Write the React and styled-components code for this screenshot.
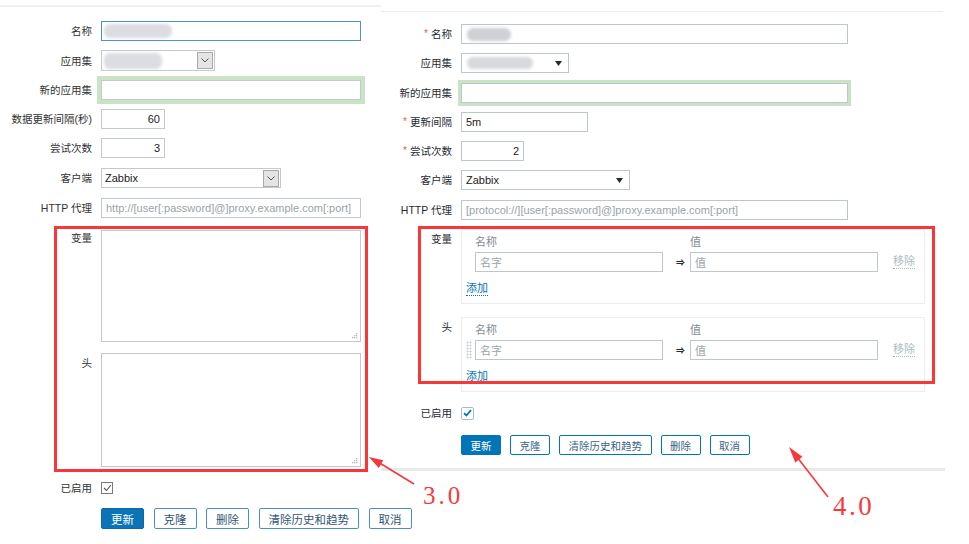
import React from "react";
import styled, { createGlobalStyle } from "styled-components";

const GlobalStyle = createGlobalStyle`
  html, body {
    margin: 0;
    padding: 0;
    background: #fff;
    overflow: hidden;
  }
  body {
    font-family: "Liberation Sans", "Noto Sans CJK SC", sans-serif;
    color: #333;
  }
`;

const Page = styled.div`
  position: relative;
  width: 969px;
  height: 544px;
  display: flex;
  align-items: flex-start;
`;

/* ---------- 3.0 panel (left) ---------- */

const OldPanel = styled.div`
  width: 381px;
  flex: none;
  padding-top: 5px;
`;

const OldTopLine = styled.div`
  width: 428px;
  height: 2px;
  background: #f0f0f0;
`;

const Form = styled.div`
  display: flex;
  flex-direction: column;
  padding-top: ${(p) => p.$top}px;
`;

const Row = styled.div`
  display: grid;
  grid-template-columns: ${(p) => p.$labelW}px auto;
  column-gap: 9px;
  align-items: ${(p) => (p.$top ? "start" : "center")};
  margin-top: ${(p) => p.$mt || 0}px;
`;

const Label = styled.div`
  text-align: right;
  font-size: 10.5px;
  line-height: 14px;
  white-space: nowrap;
  color: ${(p) => (p.$new ? "#1f2c33" : "#333")};
  padding-top: ${(p) => p.$pt || 0}px;
`;

const Req = styled.span`
  color: #e45959;
  font-size: 10px;
  margin-right: 3px;
  vertical-align: 1px;
`;

const Field = styled.div`
  box-sizing: border-box;
  width: ${(p) => p.$w}px;
  height: ${(p) => p.$h || 20}px;
  border: 1px solid ${(p) => (p.$focus ? "#4b93c8" : p.$new ? "#bcc6cc" : "#c3cacf")};
  background: #fff;
  display: flex;
  align-items: ${(p) => (p.$grip ? "flex-end" : "center")};
  justify-content: ${(p) => (p.$right || p.$grip ? "flex-end" : "flex-start")};
  padding: ${(p) => (p.$grip ? "2px" : "0 4px")};
  font-size: 11px;
  color: ${(p) => (p.$muted ? "#9aa3a8" : "#222")};
  box-shadow: ${(p) => (p.$glow ? `0 0 0 ${p.$glow}px #c8e4c5` : "none")};
  overflow: hidden;
  white-space: nowrap;
`;

const Blur = styled.div`
  width: ${(p) => p.$w}px;
  height: ${(p) => p.$h}px;
  margin-left: ${(p) => p.$ml || 0}px;
  background: ${(p) => p.$c || "#dcdde2"};
  border-radius: 6px;
  filter: blur(1.5px);
  flex: none;
`;

const OldSelect = styled(Field)`
  padding: 0 1px 0 0;
`;

const SelectValue = styled.div`
  flex: 1;
  display: flex;
  align-items: center;
  padding-left: 3px;
`;

const DropBtn = styled.div`
  box-sizing: border-box;
  width: 16px;
  height: 17px;
  background: #e4e4e4;
  border: 1px solid #a9a9a9;
  display: flex;
  align-items: center;
  justify-content: center;
`;

const NewSelect = styled(Field)`
  justify-content: space-between;
  padding: 0 6px 0 4px;
`;

const OldCheck = styled.div`
  box-sizing: border-box;
  width: 12px;
  height: 12px;
  border: 1px solid #7b7b7b;
  display: flex;
  align-items: center;
  justify-content: center;
`;

const ButtonBar = styled.div`
  display: flex;
  gap: ${(p) => p.$gap}px;
  white-space: nowrap;
`;

const OldButton = styled.div`
  box-sizing: border-box;
  height: 21px;
  padding: 0 9px;
  display: flex;
  align-items: center;
  font-size: 11.5px;
  border-radius: 2px;
  border: 1px solid ${(p) => (p.$primary ? "#0a6aa8" : "#4a8fc4")};
  background: ${(p) => (p.$primary ? "#0a74b6" : "#fff")};
  color: ${(p) => (p.$primary ? "#fff" : "#2f5576")};
`;

/* ---------- 4.0 panel (right) ---------- */

const NewPanel = styled.div`
  width: 564px;
  flex: none;
  padding-top: 11px;
  background: #fff;
`;

const NewTopLine = styled.div`
  width: 562px;
  height: 1px;
  background: #ececec;
`;

const BottomLine = styled.div`
  width: 564px;
  height: 3px;
  background: #e8ebed;
  margin-top: 13px;
`;

const Table = styled.div`
  box-sizing: border-box;
  width: 464px;
  border: 1px solid #ebeef0;
  padding: 3px 0 7px 4px;
`;

const TableRow = styled.div`
  display: grid;
  grid-template-columns: 9px 188px 27px 188px auto;
  align-items: center;
  height: ${(p) => p.$h}px;
  margin-top: ${(p) => p.$mt || 0}px;
  font-size: 11px;
`;

const HeadCell = styled.div`
  grid-column: ${(p) => p.$col};
  color: #7f8c93;
`;

const Arrow = styled.div`
  text-align: right;
  padding-right: 5px;
  font-size: 9px;
  font-weight: bold;
  color: #1f2c33;
`;

const Handle = styled.div`
  width: 6px;
  height: 18px;
  background: radial-gradient(circle, #cdd5d9 0.9px, transparent 1.2px) 0 0 / 3px 3px;
`;

const Remove = styled.span`
  margin-left: 15px;
  color: #acbbc2;
  border-bottom: 1px dotted #acbbc2;
  justify-self: start;
  line-height: 13px;
`;

const AddLink = styled.span`
  display: inline-block;
  margin-top: 10px;
  font-size: 11px;
  line-height: 13px;
  color: #0275b8;
  border-bottom: 1px dotted #0275b8;
`;

const NewCheck = styled.div`
  box-sizing: border-box;
  width: 13px;
  height: 13px;
  border: 1px solid #acbbc2;
  border-radius: 2px;
  display: flex;
  align-items: center;
  justify-content: center;
`;

const NewButton = styled.div`
  box-sizing: border-box;
  height: 20px;
  padding: 0 8.5px;
  display: flex;
  align-items: center;
  font-size: 10.5px;
  border-radius: 2px;
  border: 1px solid #0275b8;
  background: ${(p) => (p.$primary ? "#0275b8" : "#fff")};
  color: ${(p) => (p.$primary ? "#fff" : "#3a6788")};
`;

/* ---------- annotations ---------- */

const Overlay = styled.svg`
  position: absolute;
  left: 0;
  top: 0;
  pointer-events: none;
`;

const Version = styled.span`
  position: absolute;
  left: ${(p) => p.$x}px;
  top: ${(p) => p.$y}px;
  font-family: "Liberation Serif", serif;
  font-size: ${(p) => p.$size}px;
  line-height: 1;
  letter-spacing: ${(p) => p.$ls}px;
  color: #f63a3a;
`;

const Chevron = () => (
  <svg width="8" height="5" viewBox="0 0 8 5">
    <polyline points="0.5,0.5 4,4 7.5,0.5" fill="none" stroke="#555" strokeWidth="1" />
  </svg>
);

const Triangle = () => (
  <svg width="7" height="5" viewBox="0 0 7 5">
    <polygon points="0,0 7,0 3.5,5" fill="#1f2c33" />
  </svg>
);

const Grip = () => (
  <svg width="7" height="7" viewBox="0 0 7 7">
    <g fill="#b3b9bd">
      <rect x="5" y="1" width="1.3" height="1.3" />
      <rect x="3" y="3" width="1.3" height="1.3" />
      <rect x="5" y="3" width="1.3" height="1.3" />
      <rect x="1" y="5" width="1.3" height="1.3" />
      <rect x="3" y="5" width="1.3" height="1.3" />
      <rect x="5" y="5" width="1.3" height="1.3" />
    </g>
  </svg>
);

const PairTable = ({ handle }) => (
  <Table>
    <TableRow $h={16}>
      <HeadCell $col={2}>名称</HeadCell>
      <HeadCell $col={4}>值</HeadCell>
    </TableRow>
    <TableRow $h={20} $mt={3}>
      <div>{handle && <Handle />}</div>
      <Field $w={188} $new $muted>名字</Field>
      <Arrow>⇒</Arrow>
      <Field $w={188} $new $muted>值</Field>
      <Remove>移除</Remove>
    </TableRow>
    <AddLink>添加</AddLink>
  </Table>
);

const OldForm = () => (
  <OldPanel>
    <OldTopLine />
    <Form $top={14}>
      <Row $labelW={92}>
        <Label>名称</Label>
        <Field $w={260} $focus>
          <Blur $w={68} $h={14} $ml={-2} />
        </Field>
      </Row>
      <Row $labelW={92} $mt={9}>
        <Label>应用集</Label>
        <OldSelect $w={114} $h={21}>
          <SelectValue>
            <Blur $w={58} $h={16} $ml={-1} />
          </SelectValue>
          <DropBtn>
            <Chevron />
          </DropBtn>
        </OldSelect>
      </Row>
      <Row $labelW={92} $mt={9}>
        <Label>新的应用集</Label>
        <Field $w={260} $glow={4} />
      </Row>
      <Row $labelW={92} $mt={9}>
        <Label>数据更新间隔(秒)</Label>
        <Field $w={64} $right>60</Field>
      </Row>
      <Row $labelW={92} $mt={9}>
        <Label>尝试次数</Label>
        <Field $w={64} $right>3</Field>
      </Row>
      <Row $labelW={92} $mt={10}>
        <Label>客户端</Label>
        <OldSelect $w={180}>
          <SelectValue>Zabbix</SelectValue>
          <DropBtn>
            <Chevron />
          </DropBtn>
        </OldSelect>
      </Row>
      <Row $labelW={92} $mt={10}>
        <Label>HTTP 代理</Label>
        <Field $w={260} $muted>http://[user[:password]@]proxy.example.com[:port]</Field>
      </Row>
      <Row $labelW={92} $mt={12} $top>
        <Label $pt={1}>变量</Label>
        <Field $w={260} $h={112} $grip>
          <Grip />
        </Field>
      </Row>
      <Row $labelW={92} $mt={11} $top>
        <Label $pt={3}>头</Label>
        <Field $w={260} $h={114} $grip>
          <Grip />
        </Field>
      </Row>
      <Row $labelW={92} $mt={14}>
        <Label>已启用</Label>
        <OldCheck>
          <svg width="9" height="8" viewBox="0 0 9 8">
            <polyline points="1,4 3.5,6.5 8,1" fill="none" stroke="#555" strokeWidth="1.1" />
          </svg>
        </OldCheck>
      </Row>
      <Row $labelW={92} $mt={13}>
        <div />
        <ButtonBar $gap={9.5}>
          <OldButton $primary>更新</OldButton>
          <OldButton>克隆</OldButton>
          <OldButton>删除</OldButton>
          <OldButton>清除历史和趋势</OldButton>
          <OldButton>取消</OldButton>
        </ButtonBar>
      </Row>
    </Form>
  </OldPanel>
);

const NewForm = () => (
  <NewPanel>
    <NewTopLine />
    <Form $top={12}>
      <Row $labelW={71}>
        <Label $new>
          <Req>*</Req>名称
        </Label>
        <Field $w={387} $new>
          <Blur $w={44} $h={13} $ml={1} $c="#cfd0d4" />
        </Field>
      </Row>
      <Row $labelW={71} $mt={9}>
        <Label $new>应用集</Label>
        <NewSelect $w={108} $new>
          <Blur $w={66} $h={12} $ml={1} $c="#d8d9dd" />
          <Triangle />
        </NewSelect>
      </Row>
      <Row $labelW={71} $mt={10}>
        <Label $new>新的应用集</Label>
        <Field $w={387} $new $glow={3} />
      </Row>
      <Row $labelW={71} $mt={9}>
        <Label $new>
          <Req>*</Req>更新间隔
        </Label>
        <Field $w={127} $new>5m</Field>
      </Row>
      <Row $labelW={71} $mt={9}>
        <Label $new>
          <Req>*</Req>尝试次数
        </Label>
        <Field $w={63} $new $right>2</Field>
      </Row>
      <Row $labelW={71} $mt={9}>
        <Label $new>客户端</Label>
        <NewSelect $w={169} $new>
          <span>Zabbix</span>
          <Triangle />
        </NewSelect>
      </Row>
      <Row $labelW={71} $mt={10}>
        <Label $new>HTTP 代理</Label>
        <Field $w={387} $new $muted>
          [protocol://][user[:password]@]proxy.example.com[:port]
        </Field>
      </Row>
      <Row $labelW={71} $mt={9} $top>
        <Label $new $pt={3}>变量</Label>
        <PairTable />
      </Row>
      <Row $labelW={71} $mt={13} $top>
        <Label $new $pt={3}>头</Label>
        <PairTable handle />
      </Row>
      <Row $labelW={71} $mt={14}>
        <Label $new>已启用</Label>
        <NewCheck>
          <svg width="9" height="8" viewBox="0 0 9 8">
            <polyline points="1,4.2 3.4,6.5 8,1.2" fill="none" stroke="#0275b8" strokeWidth="1.8" />
          </svg>
        </NewCheck>
      </Row>
      <Row $labelW={71} $mt={15}>
        <div />
        <ButtonBar $gap={9}>
          <NewButton $primary>更新</NewButton>
          <NewButton>克隆</NewButton>
          <NewButton>清除历史和趋势</NewButton>
          <NewButton>删除</NewButton>
          <NewButton>取消</NewButton>
        </ButtonBar>
      </Row>
    </Form>
    <BottomLine />
  </NewPanel>
);

const App = () => (
  <>
    <GlobalStyle />
    <Page>
      <OldForm />
      <NewForm />
      <Overlay width="969" height="544" viewBox="0 0 969 544">
        <g fill="none" stroke="#f83838" strokeWidth="3">
          <rect x="55.5" y="227.5" width="311" height="243" />
          <rect x="419.5" y="227.5" width="514" height="155" />
        </g>
        <g stroke="#f83838" strokeWidth="1.6">
          <line x1="414" y1="484" x2="378" y2="462" />
          <line x1="828" y1="497" x2="797" y2="457" />
        </g>
        <g fill="#f83838">
          <polygon points="369,457 383.3,460.3 378.7,468.1" />
          <polygon points="789,447 802.4,456.8 795.3,462.4" />
        </g>
      </Overlay>
      <Version $x={423} $y={483} $size={25} $ls={3}>3.0</Version>
      <Version $x={833} $y={493} $size={27} $ls={2.5}>4.0</Version>
    </Page>
  </>
);

export default App;
